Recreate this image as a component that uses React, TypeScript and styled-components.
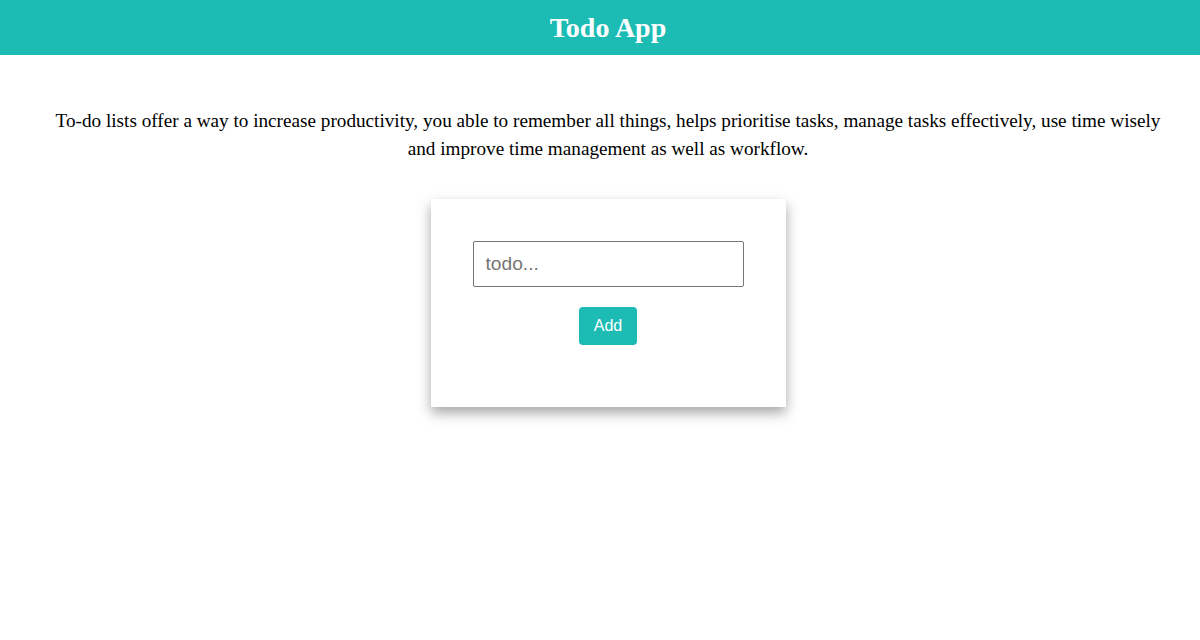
import * as React from "react";
import styled, { createGlobalStyle } from "styled-components";

const GlobalStyle = createGlobalStyle`
  html, body {
    margin: 0;
    padding: 0;
    background: #ffffff;
  }
  body {
    font-family: "Liberation Serif", "Times New Roman", serif;
    min-height: 640px;
  }
`;

const App: React.FC = () => {
  const [input, setInput] = React.useState<string>("");
  const [todos, setTodos] = React.useState<string[]>([]);

  const addTodo = React.useCallback(() => {
    if (input.trim() !== "") {
      setTodos([...todos, input]);
      setInput("");
    }
  }, [input, todos]);

  return (
    <>
      <GlobalStyle />
      <Header>
        <Title>Todo App</Title>
      </Header>
      <Main>
        <Intro>
          To-do lists offer a way to increase productivity, you able to remember all things, helps
          prioritise tasks, manage tasks effectively, use time wisely and improve time management as
          well as workflow.
        </Intro>
        <Card>
          <Input
            placeholder="todo..."
            value={input}
            onChange={(e) => setInput(e.currentTarget.value)}
            onKeyDown={(e) => e.key === "Enter" && addTodo()}
          />
          <AddButton onClick={addTodo}>Add</AddButton>
          {todos.map((todo, i) => (
            <TodoItem key={i}>{todo}</TodoItem>
          ))}
        </Card>
      </Main>
    </>
  );
};

const Header = styled.header`
  height: 55px;
  background-color: #1cbbb4;
  display: flex;
  align-items: center;
  justify-content: center;
  padding-left: 16px;
`;

const Title = styled.h1`
  margin: 0;
  color: #ffffff;
  font-family: "Liberation Serif", "Times New Roman", serif;
  font-size: 28px;
  font-weight: 700;
`;

const Main = styled.main`
  display: flex;
  flex-direction: column;
  align-items: center;
  padding: 0 32px 80px 48px;
`;

const Intro = styled.p`
  margin: 52px 0 36px;
  text-align: center;
  font-size: 19.2px;
  line-height: 28px;
  color: #000000;
`;

const Card = styled.div`
  width: 355px;
  box-sizing: border-box;
  padding: 42px 42px 62px;
  background: #ffffff;
  box-shadow: 0 6px 12px rgba(0, 0, 0, 0.35);
  display: flex;
  flex-direction: column;
  align-items: center;
  gap: 20px;
`;

const Input = styled.input`
  width: 271px;
  height: 46px;
  box-sizing: border-box;
  padding: 0 11px 0 12px;
  border: 1px solid #767676;
  border-radius: 2px;
  font-family: "Liberation Sans", Arial, sans-serif;
  font-size: 19.2px;
  color: #333333;
  outline: none;

  &::placeholder {
    color: #757575;
  }
`;

const AddButton = styled.button`
  width: 58px;
  height: 38px;
  border: none;
  border-radius: 4px;
  background-color: #1cbbb4;
  color: #ffffff;
  font-family: "Liberation Sans", Arial, sans-serif;
  font-size: 16px;
  cursor: pointer;
`;

const TodoItem = styled.div`
  font-family: "Liberation Sans", Arial, sans-serif;
  font-size: 16px;
`;

export default App;
